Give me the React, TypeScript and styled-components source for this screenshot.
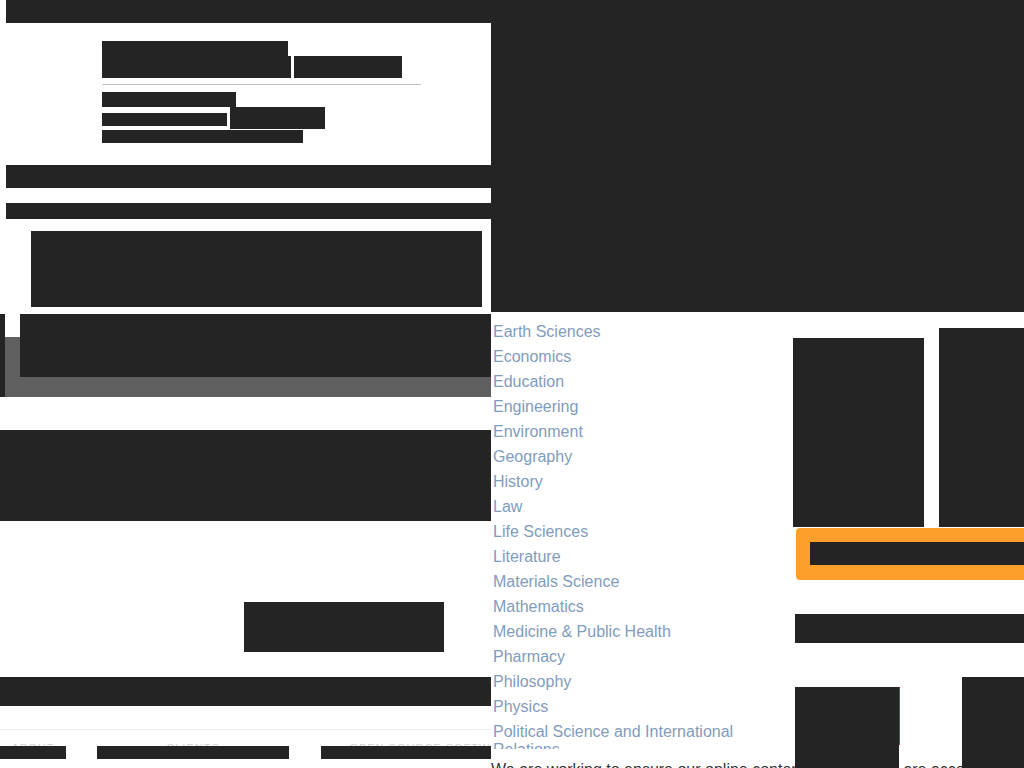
import React from 'react';
import styled, { createGlobalStyle } from 'styled-components';

const INK = '#242424';

const GlobalStyle = createGlobalStyle`
  html, body {
    margin: 0;
    padding: 0;
    background: #fff;
    overflow: hidden;
  }
  body {
    font-family: "Liberation Sans", Arial, sans-serif;
  }
`;

const Page = styled.div`
  display: grid;
  grid-template-columns: 491px 533px;
  width: 1024px;
  height: 768px;
  overflow: hidden;
`;

// 왼쪽 컬럼
const LeftColumn = styled.div`
  display: flex;
  flex-direction: column;
`;

const TopStrip = styled.div`
  height: 23px;
  margin-left: 6px;
  background: ${INK};
`;

const Masthead = styled.header`
  display: flex;
  flex-direction: column;
  align-items: flex-start;
  height: 142px;
  margin-left: 6px;
  padding: 18px 0 0 96px;
  box-sizing: border-box;
`;

const Mask = styled.span<{ $w: number; $h: number; $top?: number }>`
  display: block;
  flex-shrink: 0;
  width: ${(p) => p.$w}px;
  height: ${(p) => p.$h}px;
  margin-top: ${(p) => p.$top ?? 0}px;
  background: ${INK};
`;

const MaskRow = styled.div<{ $gap: number }>`
  display: flex;
  align-items: flex-start;
  gap: ${(p) => p.$gap}px;
`;

const Divider = styled.hr`
  width: 319px;
  height: 1px;
  margin: 6px 0 7px;
  border: 0;
  background: #bfbfbf;
`;

const NavBar = styled.nav`
  height: 23px;
  margin-left: 6px;
  background: ${INK};
`;

const SubNav = styled.div`
  height: 16px;
  margin: 15px 0 0 6px;
  background: ${INK};
`;

const Banner = styled.div`
  height: 76px;
  margin: 12px 9px 0 31px;
  background: ${INK};
`;

const Hero = styled.section`
  height: 83px;
  margin-top: 7px;
  border-left: 5px solid ${INK};
  background: linear-gradient(#fff 23px, #5f5f5f 23px);
`;

const HeroCard = styled.div`
  height: 63px;
  margin-left: 15px;
  background: ${INK};
`;

const Feature = styled.section`
  height: 91px;
  margin-top: 33px;
  background: ${INK};
`;

const CallButton = styled.div`
  width: 200px;
  height: 50px;
  margin: 81px 0 0 244px;
  background: ${INK};
`;

const InfoStrip = styled.div`
  height: 29px;
  margin-top: 25px;
  background: ${INK};
`;

const Rule = styled.div`
  height: 1px;
  margin-top: 23px;
  background: #ececec;
`;

const Footer = styled.footer`
  display: flex;
  margin-top: 13px;
`;

const FooterLink = styled.span<{ $w: number; $gap: number }>`
  position: relative;
  display: block;
  width: ${(p) => p.$w}px;
  height: 16px;
  margin-left: ${(p) => p.$gap}px;
  font-size: 11px;
  line-height: 10px;
  letter-spacing: 1px;
  text-transform: uppercase;
  text-align: center;
  white-space: nowrap;
  color: #cfcfcf;
  overflow: hidden;

  &::after {
    content: '';
    position: absolute;
    left: 0;
    right: 0;
    top: 3px;
    height: 13px;
    background: ${INK};
  }
`;

// 오른쪽 컬럼
const RightColumn = styled.div`
  display: flex;
  flex-direction: column;
`;

const Showcase = styled.div`
  height: 312px;
  background: ${INK};
`;

const MainRow = styled.div`
  display: flex;
  align-items: flex-start;
  height: 437px;
`;

const SubjectList = styled.ul`
  flex-shrink: 0;
  width: 302px;
  height: 437px;
  margin: 0;
  padding: 7px 0 0 2px;
  box-sizing: border-box;
  list-style: none;
  overflow: hidden;
`;

const SubjectItem = styled.li`
  padding: 3.5px 0;
  font-size: 16px;
  line-height: 18px;
  color: #7f9cbe;
`;

const Sidebar = styled.aside`
  display: flex;
  flex-direction: column;
  flex-shrink: 0;
  width: 231px;
`;

const Thumbs = styled.div`
  display: flex;
  align-items: flex-end;
  gap: 15px;
  margin-top: 16px;
`;

const Thumb = styled.div<{ $h: number }>`
  flex-shrink: 0;
  width: 131px;
  height: ${(p) => p.$h}px;
  background: ${INK};
`;

const Promo = styled.div`
  width: 250px;
  margin: 1px 0 0 3px;
  padding: 14px 0 15px 14px;
  box-sizing: border-box;
  border-radius: 4px;
  background: #fd9f2a;
`;

const PromoLabel = styled.div`
  height: 23px;
  background: ${INK};
`;

const SideBar = styled.div`
  width: 250px;
  height: 29px;
  margin: 34px 0 0 2px;
  background: ${INK};
`;

const Tiles = styled.div`
  display: flex;
  align-items: flex-start;
  gap: 63px;
  margin: 34px 0 0 2px;
`;

const Tile = styled.div<{ $w: number; $h: number; $top?: number; $accent?: boolean }>`
  position: relative;
  flex-shrink: 0;
  width: ${(p) => p.$w}px;
  height: ${(p) => p.$h}px;
  margin-top: ${(p) => p.$top ?? 0}px;
  background: ${INK};

  &::after {
    content: '';
    display: ${(p) => (p.$accent ? 'block' : 'none')};
    position: absolute;
    top: 0;
    right: -1px;
    width: 1px;
    height: 58px;
    background: #c4203a;
  }
`;

const Notice = styled.p`
  margin: 11px 0 0;
  font-size: 16px;
  line-height: 20px;
  color: #333;
  white-space: nowrap;
`;

const subjects = [
  'Earth Sciences',
  'Economics',
  'Education',
  'Engineering',
  'Environment',
  'Geography',
  'History',
  'Law',
  'Life Sciences',
  'Literature',
  'Materials Science',
  'Mathematics',
  'Medicine & Public Health',
  'Pharmacy',
  'Philosophy',
  'Physics',
  'Political Science and International Relations',
  'Psychology',
];

const App = () => {
  return (
    <>
      <GlobalStyle />
      <Page>
        <LeftColumn>
          <TopStrip />
          <Masthead>
            <Mask $w={186} $h={15} />
            <MaskRow $gap={3}>
              <Mask $w={189} $h={22} />
              <Mask $w={108} $h={22} />
            </MaskRow>
            <Divider />
            <Mask $w={134} $h={15} />
            <MaskRow $gap={3}>
              <Mask $w={125} $h={13} $top={6} />
              <Mask $w={95} $h={22} />
            </MaskRow>
            <Mask $w={201} $h={13} $top={1} />
          </Masthead>
          <NavBar />
          <SubNav />
          <Banner />
          <Hero>
            <HeroCard />
          </Hero>
          <Feature />
          <CallButton />
          <InfoStrip />
          <Rule />
          <Footer>
            <FooterLink $w={66} $gap={0}>About</FooterLink>
            <FooterLink $w={192} $gap={31}>Clients</FooterLink>
            <FooterLink $w={170} $gap={32}>&nbsp;&nbsp;&nbsp;&nbsp;&nbsp;&nbsp;&nbsp;Open Source Software</FooterLink>
          </Footer>
        </LeftColumn>

        <RightColumn>
          <Showcase />
          <MainRow>
            <SubjectList>
              {subjects.map((s) => (
                <SubjectItem key={s}>{s}</SubjectItem>
              ))}
            </SubjectList>
            <Sidebar>
              <Thumbs>
                <Thumb $h={189} />
                <Thumb $h={199} />
              </Thumbs>
              <Promo>
                <PromoLabel />
              </Promo>
              <SideBar />
              <Tiles>
                <Tile $w={104} $h={90} $top={10} $accent />
                <Tile $w={80} $h={100} />
              </Tiles>
            </Sidebar>
          </MainRow>
          <Notice>We are working to ensure our online content and services are accessible to everyone.</Notice>
        </RightColumn>
      </Page>
    </>
  );
};

export default App;
